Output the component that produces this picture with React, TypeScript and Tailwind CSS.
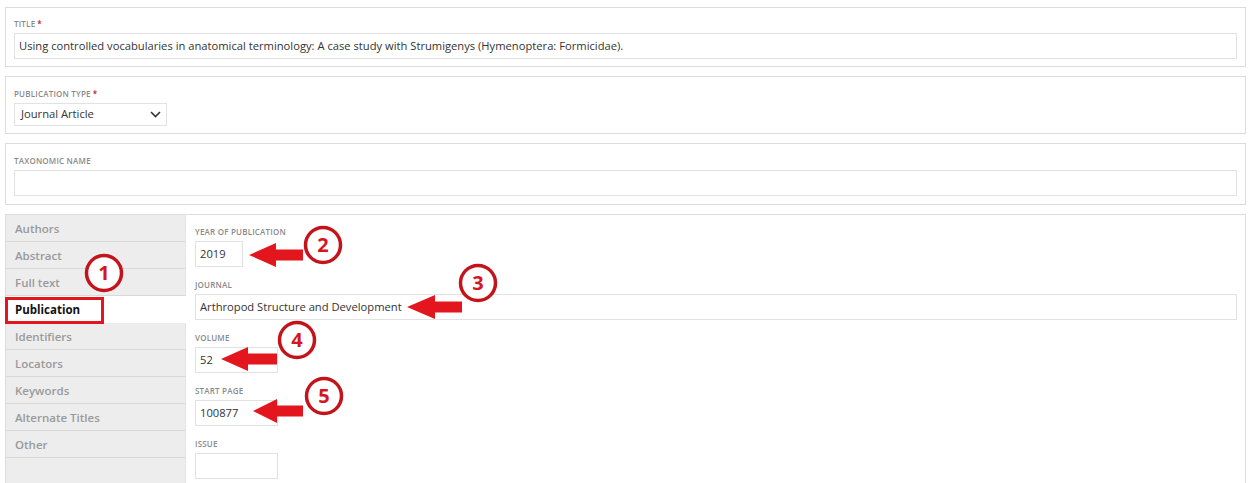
import React from 'react';

// Etiqueta de campo (mayúsculas, gris, pequeña)
function FieldLabel({ text, required }: { text: string; required?: boolean }) {
  return (
    <div className="text-[8px] leading-[10px] font-semibold uppercase tracking-[0.2px] text-[#8a8a8a] mb-[4px]">
      {text}
      {required && <span className="text-[#c8102e] ml-[2px]">*</span>}
    </div>
  );
}

function TextBox({ value, className }: { value?: string; className?: string }) {
  return (
    <div
      className={`h-[26px] border border-[#e2e2e2] bg-white flex items-center px-[4px] text-[11.2px] text-[#333] whitespace-nowrap overflow-hidden ${className || ''}`}
    >
      {value}
    </div>
  );
}

const tabs = [
  'Authors',
  'Abstract',
  'Full text',
  'Publication',
  'Identifiers',
  'Locators',
  'Keywords',
  'Alternate Titles',
  'Other',
];

// Flecha roja de anotación (punta hacia la izquierda)
function Arrow({ tipX, y, endX, head }: { tipX: number; y: number; endX: number; head: number }) {
  const hb = tipX + head;
  const points = [
    `${tipX},${y}`,
    `${hb},${y - 12}`,
    `${hb},${y - 5.5}`,
    `${endX},${y - 5.5}`,
    `${endX},${y + 5.5}`,
    `${hb},${y + 5.5}`,
    `${hb},${y + 12}`,
  ].join(' ');
  return <polygon points={points} fill="#e3161e" />;
}

function Badge({ cx, cy, n }: { cx: number; cy: number; n: number }) {
  return (
    <g>
      <circle cx={cx} cy={cy} r={17.5} fill="white" stroke="#c4131b" strokeWidth={3.5} />
      <text
        x={cx}
        y={cy + 7}
        textAnchor="middle"
        fontSize="20"
        fontWeight="700"
        fill="#d4161e"
        fontFamily="'Open Sans', 'Liberation Sans', sans-serif"
      >
        {n}
      </text>
    </g>
  );
}

export default function App() {
  return (
    <div className="relative w-[1257px] h-[483px] overflow-hidden bg-white font-['Open_Sans','Liberation_Sans',sans-serif]">
      <div className="pl-[5px] pr-[11px] pt-[7px] flex flex-col gap-[9px]">
        {/* Título */}
        <div className="border border-[#dcdcdc] px-[8px] pt-[11px] pb-[7px]">
          <FieldLabel text="Title" required />
          <TextBox value="Using controlled vocabularies in anatomical terminology: A case study with Strumigenys (Hymenoptera: Formicidae)." />
        </div>

        {/* Tipo de publicación */}
        <div className="border border-[#dcdcdc] px-[8px] pt-[12px] pb-[7px]">
          <FieldLabel text="Publication type" required />
          <div className="w-[153px] h-[23px] border border-[#e2e2e2] flex items-center justify-between pl-[6px] pr-[5px] text-[11.2px] text-[#333]">
            <span>Journal Article</span>
            <svg width="11" height="7" viewBox="0 0 11 7" fill="none">
              <path d="M1 1l4.5 4.5L10 1" stroke="#333" strokeWidth="1.6" />
            </svg>
          </div>
        </div>

        {/* Nombre taxonómico */}
        <div className="border border-[#dcdcdc] px-[8px] pt-[12px] pb-[8px]">
          <FieldLabel text="Taxonomic name" />
          <TextBox />
        </div>

        {/* Pestañas + contenido */}
        <div className="border border-[#dcdcdc] border-b-0 flex h-[300px]">
          <div className="w-[180px] bg-[#ededed] border-r border-[#e4e4e4] flex flex-col">
            {tabs.map((t) => (
              <div
                key={t}
                className={`h-[27px] flex items-center pl-[9px] pt-[2px] text-[11.5px] border-b ${
                  t === 'Publication'
                    ? 'bg-white text-[#111] font-bold border-white mr-[-1px]'
                    : 'text-[#9a9a9a] font-semibold border-[#d9d9d9]'
                }`}
              >
                {t}
              </div>
            ))}
          </div>
          <div className="flex-1 pl-[9px] pr-[8px] pt-[12px] flex flex-col gap-[13px]">
            <div>
              <FieldLabel text="Year of publication" />
              <TextBox value="2019" className="w-[48px]" />
            </div>
            <div>
              <FieldLabel text="Journal" />
              <TextBox value="Arthropod Structure and Development" />
            </div>
            <div>
              <FieldLabel text="Volume" />
              <TextBox value="52" className="w-[83px]" />
            </div>
            <div>
              <FieldLabel text="Start page" />
              <TextBox value="100877" className="w-[83px]" />
            </div>
            <div>
              <FieldLabel text="Issue" />
              <TextBox className="w-[83px]" />
            </div>
          </div>
        </div>
      </div>

      {/* Capa de anotaciones */}
      <svg className="absolute left-0 top-0 pointer-events-none" width="1257" height="483">
        <rect x="6.5" y="298.5" width="96" height="24" fill="none" stroke="#e3161e" strokeWidth="3" />
        <Arrow tipX={249} y={255} endX={303} head={27} />
        <Arrow tipX={407} y={307} endX={462} head={28} />
        <Arrow tipX={221} y={359} endX={277} head={27} />
        <Arrow tipX={253} y={411} endX={303} head={24} />
        <Badge cx={104} cy={273} n={1} />
        <Badge cx={323} cy={245} n={2} />
        <Badge cx={478} cy={283} n={3} />
        <Badge cx={297} cy={340} n={4} />
        <Badge cx={324} cy={396} n={5} />
      </svg>
    </div>
  );
}
